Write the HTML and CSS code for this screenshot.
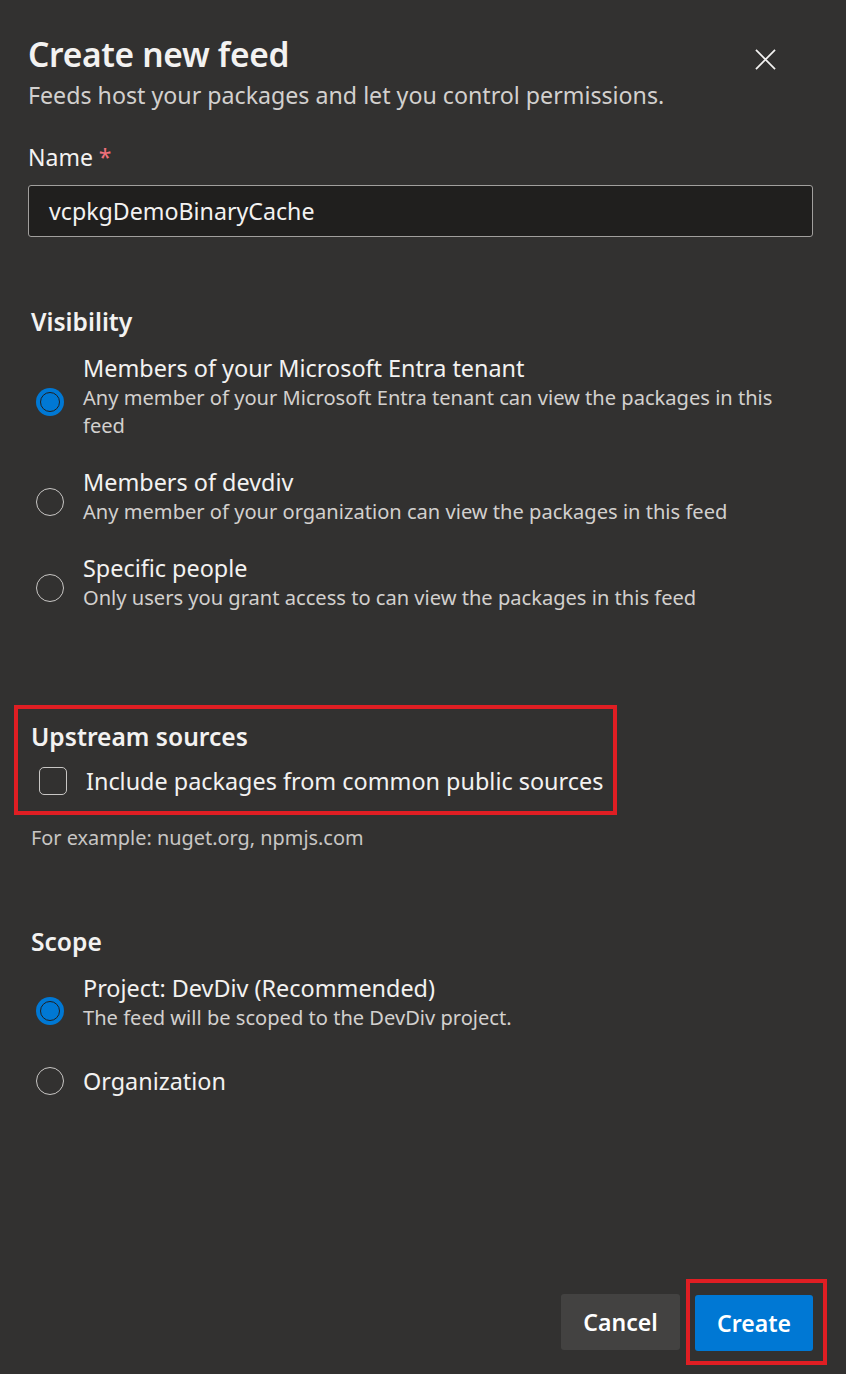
FILE: index.html
```html
<!DOCTYPE html>
<html lang="en">
<head>
<meta charset="utf-8">
<title>Create new feed</title>
<link rel="stylesheet" href="styles.css">
</head>
<body>
<div class="panel">
  <header class="header">
    <div class="titles">
      <h1 class="title">Create new feed</h1>
      <p class="subtitle">Feeds host your packages and let you control permissions.</p>
    </div>
    <button class="close" aria-label="Close">
      <svg width="22" height="22" viewBox="0 0 22 22"><path d="M1 1L21 21M21 1L1 21" stroke="#f3f2f1" stroke-width="1.8" fill="none"/></svg>
    </button>
  </header>

  <div class="field">
    <label class="label">Name <span class="req">*</span></label>
    <div class="input">vcpkgDemoBinaryCache</div>
  </div>

  <section class="section visibility">
    <h2 class="heading">Visibility</h2>
    <div class="radios">
      <div class="radio-row">
        <span class="radio checked"></span>
        <div class="radio-text">
          <div class="radio-label">Members of your Microsoft Entra tenant</div>
          <div class="radio-desc">Any member of your Microsoft Entra tenant can view the packages in this feed</div>
        </div>
      </div>
      <div class="radio-row">
        <span class="radio"></span>
        <div class="radio-text">
          <div class="radio-label">Members of devdiv</div>
          <div class="radio-desc">Any member of your organization can view the packages in this feed</div>
        </div>
      </div>
      <div class="radio-row">
        <span class="radio"></span>
        <div class="radio-text">
          <div class="radio-label">Specific people</div>
          <div class="radio-desc">Only users you grant access to can view the packages in this feed</div>
        </div>
      </div>
    </div>
  </section>

  <section class="section upstream">
    <div class="highlight upstream-box">
      <h2 class="heading">Upstream sources</h2>
      <div class="check-row">
        <span class="checkbox"></span>
        <span class="check-label">Include packages from common public sources</span>
      </div>
    </div>
    <p class="hint">For example: nuget.org, npmjs.com</p>
  </section>

  <section class="section scope">
    <h2 class="heading">Scope</h2>
    <div class="radios">
      <div class="radio-row">
        <span class="radio checked"></span>
        <div class="radio-text">
          <div class="radio-label">Project: DevDiv (Recommended)</div>
          <div class="radio-desc">The feed will be scoped to the DevDiv project.</div>
        </div>
      </div>
      <div class="radio-row single">
        <span class="radio"></span>
        <div class="radio-text">
          <div class="radio-label">Organization</div>
        </div>
      </div>
    </div>
  </section>

  <footer class="footer">
    <button class="btn cancel">Cancel</button>
    <div class="highlight create-box">
      <button class="btn primary">Create</button>
    </div>
  </footer>
</div>
</body>
</html>
```

FILE: styles.css
```css
* { box-sizing: border-box; }
html, body {
  margin: 0;
  padding: 0;
  background: #323130;
}
body {
  font-family: "Noto Sans", "Open Sans", sans-serif;
  color: #f3f2f1;
  width: 846px;
  height: 1374px;
  overflow: hidden;
}
.panel {
  height: 1374px;
  padding: 31px 33px 0 28px;
  display: flex;
  flex-direction: column;
}
.header {
  display: flex;
  justify-content: space-between;
  align-items: flex-start;
}
.title {
  margin: 0;
  font-size: 33.5px;
  font-weight: 600;
  line-height: 46px;
  letter-spacing: -0.3px;
}
.subtitle {
  margin: 2px 0 0;
  font-size: 23.2px;
  line-height: 32px;
  color: #d2d0ce;
}
.close {
  background: none;
  border: none;
  padding: 0;
  margin: 18px 37px 0 0;
  width: 21px;
  height: 21px;
  display: block;
}
.close svg { display: block; width: 21px; height: 21px; }
.field { margin-top: 30px; }
.label {
  display: block;
  font-size: 23px;
  line-height: 32px;
}
.req { color: #f1707b; }
.input {
  margin-top: 12px;
  height: 52px;
  border: 1px solid #a19f9d;
  border-radius: 3px;
  background: #201f1e;
  padding: 0 20px;
  display: flex;
  align-items: center;
  font-size: 23.2px;
}
.section { padding-left: 3px; }
.heading {
  margin: 0;
  font-size: 24.6px;
  font-weight: 600;
  line-height: 34px;
}
.visibility { margin-top: 68px; }
.radios {
  display: flex;
  flex-direction: column;
}
.radio-row {
  display: flex;
  align-items: center;
  gap: 19px;
  margin-top: 26px;
  padding-left: 5px;
}
.radio-row:first-child { margin-top: 13px; }
.radio {
  flex: none;
  width: 28px;
  height: 28px;
  margin-top: 11px;
  border-radius: 50%;
  border: 1.5px solid #c8c6c4;
  position: relative;
}
.radio.checked {
  border: none;
  background: #0078d4;
}
.radio.checked::after {
  content: "";
  position: absolute;
  inset: 4px;
  border-radius: 50%;
  border: 1.5px solid #201f1e;
  background: #0078d4;
}
.radio-label {
  font-size: 23.4px;
  line-height: 32px;
}
.radio-desc {
  font-size: 20.1px;
  line-height: 28px;
  color: #d2d0ce;
  padding-right: 30px;
}
.upstream { margin-top: 93px; padding-left: 0; }
.highlight {
  border: 4px solid #e01e23;
}
.upstream-box {
  margin-left: -14px;
  width: 603px;
  padding: 11px 0 14px 13px;
}
.check-row {
  display: flex;
  align-items: center;
  gap: 19px;
  margin-top: 11px;
  padding-left: 8px;
}
.checkbox {
  flex: none;
  width: 28px;
  height: 28px;
  border: 1.5px solid #c8c6c4;
  border-radius: 5px;
}
.check-label {
  font-size: 23.4px;
  line-height: 32px;
}
.hint {
  margin: 9px 0 0 3px;
  font-size: 19.9px;
  line-height: 28px;
  color: #c8c6c4;
}
.scope { margin-top: 73px; }
.scope .radio-row:first-child .radio { margin-top: 18px; }
.scope .radio-row.single { margin-top: 33px; }
.scope .radio-row.single .radio { margin-top: 0; }
.footer {
  margin-top: auto;
  margin-bottom: 9px;
  margin-right: -14px;
  display: flex;
  justify-content: flex-end;
  align-items: center;
  gap: 6px;
}
.btn {
  font-family: inherit;
  border: none;
  border-radius: 3px;
  height: 56px;
  font-size: 23px;
  font-weight: 600;
  color: #ffffff;
  padding: 0;
}
.cancel {
  width: 119px;
  background: #434241;
}
.create-box {
  padding: 12px 10px 10px 5px;
}
.primary {
  width: 118px;
  background: #0078d4;
  display: block;
}
```
